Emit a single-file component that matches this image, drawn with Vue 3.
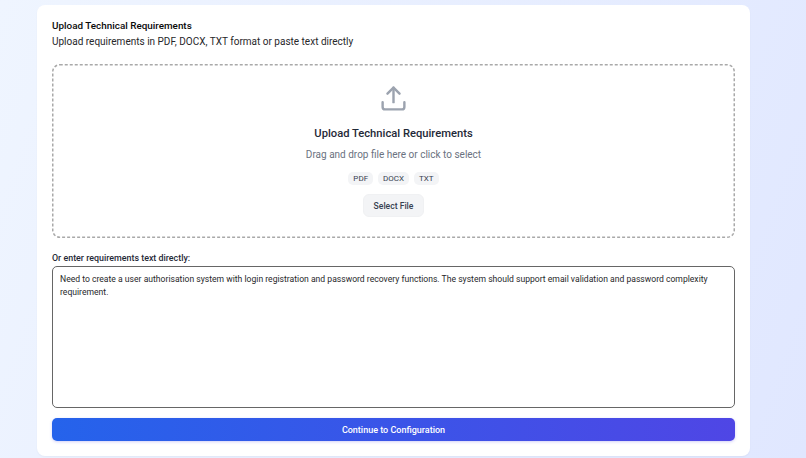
<script setup>
const formats = ['PDF', 'DOCX', 'TXT']
const text = 'Need to create a user authorisation system with login registration and password recovery functions. The system should support email validation and password complexity requirement.'
</script>

<template>
  <main class="page">
    <section class="card">
      <h1 class="title">Upload Technical Requirements</h1>
      <p class="subtitle">Upload requirements in PDF, DOCX, TXT format or paste text directly</p>
      <div class="drop">
        <svg class="dashes" width="683" height="174" fill="none">
          <rect x="0.75" y="0.75" width="681.5" height="172.5" rx="7" stroke="#a9a9a9" stroke-width="1.5" stroke-dasharray="3 2" />
        </svg>
        <svg class="icon" viewBox="0 0 24 24" fill="none" stroke="currentColor" stroke-width="2" stroke-linecap="round" stroke-linejoin="round">
          <path d="M21 15v4a2 2 0 0 1-2 2H5a2 2 0 0 1-2-2v-4" />
          <path d="M17 8l-5-5-5 5" />
          <path d="M12 3v12" />
        </svg>
        <h2 class="drop-title">Upload Technical Requirements</h2>
        <p class="drop-hint">Drag and drop file here or click to select</p>
        <div class="chips">
          <span v-for="f in formats" :key="f" class="chip">{{ f }}</span>
        </div>
        <button class="select" type="button">Select File</button>
      </div>
      <label class="label" for="req">Or enter requirements text directly:</label>
      <textarea id="req" class="area" :value="text"></textarea>
      <button class="cta" type="button">Continue to Configuration</button>
    </section>
  </main>
</template>

<style>
html, body { margin: 0; padding: 0; }
</style>

<style scoped>
.page {
  height: 458px;
  box-sizing: border-box;
  overflow: hidden;
  padding: 5px 56px 0 37px;
  background: linear-gradient(110deg, #eff5ff, #e0e7ff);
  font-family: Roboto, "Noto Sans", sans-serif;
}
.card {
  height: 451px;
  box-sizing: border-box;
  display: flex;
  flex-direction: column;
  padding: 14px 15px 15px;
  background: #fff;
  border-radius: 8px;
  box-shadow: 0 1px 2px rgba(0, 0, 0, 0.04);
}
.title {
  margin: 0;
  font-size: 9.9px;
  line-height: 14px;
  font-weight: 500;
  color: #0a0a0a;
}
.subtitle {
  margin: 1px 0 0;
  font-size: 10px;
  line-height: 16px;
  color: #27272a;
}
.drop {
  position: relative;
  margin-top: 14px;
  height: 174px;
  box-sizing: border-box;
  display: flex;
  flex-direction: column;
  align-items: center;
  padding-top: 20px;
}
.dashes {
  position: absolute;
  top: 0;
  left: 0;
}
.icon {
  width: 29px;
  height: 29px;
  color: #9ca3af;
}
.drop-title {
  margin: 12px 0 0;
  font-size: 11.2px;
  line-height: 18px;
  font-weight: 500;
  color: #1f2937;
}
.drop-hint {
  margin: 4px 0 0;
  font-size: 10px;
  line-height: 16px;
  color: #6b7280;
}
.chips {
  display: flex;
  gap: 5px;
  margin-top: 9px;
}
.chip {
  padding: 0 5px;
  font-size: 8px;
  line-height: 13px;
  font-weight: 400;
  color: #374151;
  background: #f3f4f6;
  border-radius: 5px;
}
.select {
  margin-top: 9px;
  width: 61px;
  height: 23px;
  padding: 0;
  border: 1px solid #f0f1f3;
  border-radius: 6px;
  background: #f3f4f6;
  font: 500 8.6px Roboto, sans-serif;
  color: #374151;
}
.label {
  margin-top: 14px;
  font-size: 8.9px;
  line-height: 13px;
  font-weight: 500;
  color: #1f2937;
}
.area {
  margin-top: 1px;
  height: 142px;
  box-sizing: border-box;
  padding: 6px 7px;
  border: 1px solid #666;
  border-radius: 5px;
  resize: none;
  font: 400 8.6px/12.5px Roboto, sans-serif;
  color: #27272a;
  background: #fff;
  outline: none;
}
.cta {
  margin-top: 10px;
  height: 23px;
  padding: 0;
  border: 0;
  border-radius: 5px;
  background: linear-gradient(90deg, #2563eb, #4f46e5);
  box-shadow: 0 1px 3px rgba(79, 70, 229, 0.25);
  font: 500 9px Roboto, sans-serif;
  color: #fff;
}
</style>
